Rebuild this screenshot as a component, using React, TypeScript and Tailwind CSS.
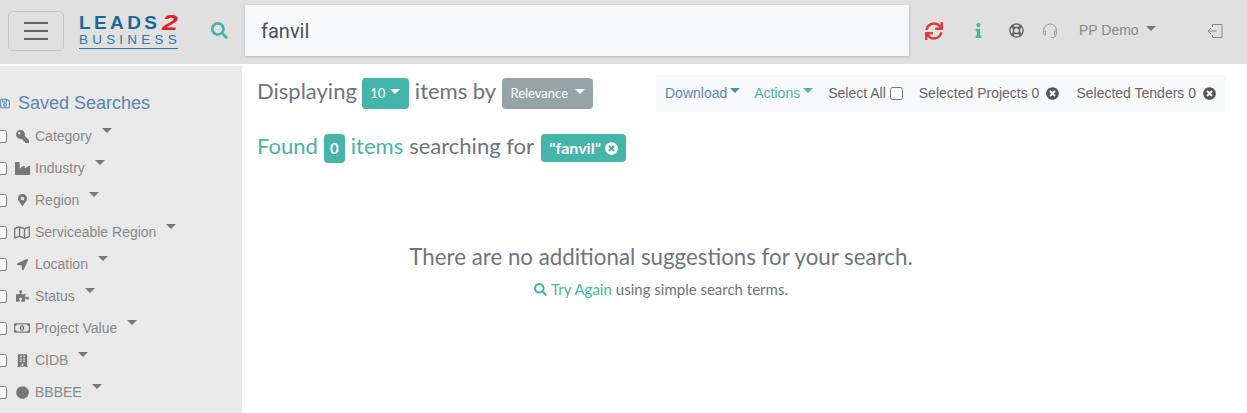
import React from "react";
import {
  FaBuilding,
  FaCircle,
  FaIndustry,
  FaInfo,
  FaKey,
  FaLocationArrow,
  FaMapMarkerAlt,
  FaPuzzlePiece,
  FaRegLifeRing,
  FaRegMap,
  FaRegMoneyBillAlt,
  FaRegSave,
  FaSearch,
  FaSync,
  FaTimesCircle,
} from "react-icons/fa";

const Caret = ({ className = "" }: { className?: string }) => (
  <span
    className={`inline-block w-0 h-0 border-x-[5px] border-t-[5px] border-x-transparent ${className}`}
  />
);

const filters = [
  { label: "Category", icon: <FaKey className="w-[13px] h-[13px] -scale-x-100" /> },
  { label: "Industry", icon: <FaIndustry className="w-[15px] h-[15px]" /> },
  { label: "Region", icon: <FaMapMarkerAlt className="w-[9px] h-[12px]" /> },
  { label: "Serviceable Region", icon: <FaRegMap className="w-[16px] h-[15px]" /> },
  { label: "Location", icon: <FaLocationArrow className="w-[11px] h-[11px]" /> },
  { label: "Status", icon: <FaPuzzlePiece className="w-[13px] h-[12px]" /> },
  { label: "Project Value", icon: <FaRegMoneyBillAlt className="w-[16px] h-[14px]" /> },
  { label: "CIDB", icon: <FaBuilding className="w-[11px] h-[15px]" /> },
  { label: "BBBEE", icon: <FaCircle className="w-[13px] h-[13px]" /> },
];

const App = () => {
  return (
    <div className="w-[1247px] h-[413px] overflow-hidden bg-white font-[Lato,sans-serif]">
      <header className="h-[64px] pb-[3px] bg-[#e0e0e0] flex items-center">
        <button className="ml-2 w-[56px] h-[40px] rounded-[5px] border border-[#c4c4c4] flex flex-col items-center justify-center gap-[6px] shrink-0">
          <span className="w-6 h-[2px] bg-[#666]" />
          <span className="w-6 h-[2px] bg-[#666]" />
          <span className="w-6 h-[2px] bg-[#666]" />
        </button>
        <div className="ml-[15px] w-[99px] shrink-0 font-[Liberation_Sans,sans-serif] mt-px">
          <div className="flex items-end h-[18px] leading-none overflow-visible">
            <span className="text-[19px] font-bold text-[#17699b] tracking-[3.4px]">LEADS</span>
            <span className="ml-[2px] text-[22px] font-bold italic text-[#e2202c] leading-[18px] inline-block scale-x-[1.3] origin-left">
              2
            </span>
          </div>
          <div className="mt-[2px] text-[13.5px] leading-[12px] text-[#2d78a8] tracking-[4.2px] whitespace-nowrap">
            BUSINESS
          </div>
          <div className="h-px bg-[#2d78a8] mt-[2px]" />
        </div>
        <FaSearch className="ml-[33px] w-[17px] h-[17px] text-[#45b5aa] shrink-0" />
        <div className="ml-[17px] w-[664px] h-[51px] bg-[#f8f9fa] shadow-[0_1px_3px_rgba(0,0,0,0.2)] flex items-center pl-4 text-[20px] text-[#495057] font-[Roboto,sans-serif] shrink-0">
          fanvil
        </div>
        <FaSync className="ml-4 w-[18px] h-[18px] text-[#dc3f33] shrink-0" />
        <FaInfo className="ml-[31px] w-[9px] h-[15px] text-[#45b5aa] shrink-0" />
        <FaRegLifeRing className="ml-[26px] w-[15px] h-[15px] text-[#666] shrink-0" />
        <svg
          className="ml-[18px] w-[16px] h-[16px] text-[#999] shrink-0"
          viewBox="0 0 16 16"
          fill="none"
          stroke="currentColor"
        >
          <path d="M1.5 10V7.5a6.5 6.5 0 0 1 13 0V10" />
          <path d="M1.5 9.5c0-1 .6-1.5 2-1.5v4c-1.400 0-2-.5-2-1.500zM14.500 9.500c0-1-.6-1.500-2-1.500v4c1.400 0 2-.5 2-1.500z" />
          <path d="M14 12c0 1.500-1.500 2.500-3.500 2.500H9" />
        </svg>
        <span className="ml-[21px] text-[14px] text-[#888] font-[Liberation_Sans,sans-serif] whitespace-nowrap">
          PP Demo
        </span>
        <Caret className="ml-[7px] -mt-[5px] border-t-[#777]" />
        <svg
          className="ml-[51px] w-[16px] h-[16px] text-[#888] shrink-0"
          viewBox="0 0 16 16"
          fill="none"
          stroke="currentColor"
        >
          <path d="M5.500 4V1.500h9.500v13H5.500V12M9.500 8H1M4 5L1 8l3 3" />
        </svg>
      </header>

      <div className="h-[2px] bg-white" />

      <div className="flex h-[347px]">
        <aside className="w-[242px] shrink-0 bg-[#e9e9e9] pt-[26px] font-[Liberation_Sans,sans-serif] overflow-hidden">
          <div className="flex items-center h-[22px] text-[18px] text-[#5a85b8]">
            <FaRegSave className="w-[10px] h-[11px] mt-px" />
            <span className="ml-2">Saved Searches</span>
          </div>
          <ul className="mt-[6px]">
            {filters.map((f) => (
              <li key={f.label} className="flex items-center h-[32px] text-[14px] text-[#888]">
                <input type="checkbox" className="w-[13px] h-[13px] -ml-[6px] shrink-0" />
                <span className="w-[18px] ml-[6px] flex justify-center shrink-0 text-[#777]">
                  {f.icon}
                </span>
                <span className="ml-[4px] whitespace-nowrap">{f.label}</span>
                <Caret className="ml-[10px] -mt-[11px] border-t-[#777]" />
              </li>
            ))}
          </ul>
        </aside>

        <main className="flex-1 min-w-0 pl-[15px] pr-[21px] text-[#6c757d]">
          <div className="flex items-start pt-[9px]">
            <div className="flex items-center h-[37px] text-[22px] text-[#6c757d]">
              <span className="-mt-[7px]">Displaying</span>
              <button className="ml-[5px] w-[47px] h-[31px] rounded bg-[#45b5aa] text-white text-[13px] flex items-center justify-center gap-[5px]">
                10 <Caret className="-mt-[5px] border-t-white" />
              </button>
              <span className="ml-[6px] -mt-[7px]">items by</span>
              <button className="ml-[6px] w-[91px] h-[31px] rounded bg-[#95a5a5] text-white text-[13px] flex items-center justify-center gap-[7px]">
                Relevance <Caret className="-mt-[5px] border-t-white" />
              </button>
            </div>
            <div className="ml-auto w-[570px] h-[37px] bg-[#f8f9fa] flex items-center pl-[9px] text-[14px] text-[#666] font-[Liberation_Sans,sans-serif] whitespace-nowrap">
              <span className="text-[#5a85b8]">Download</span>
              <Caret className="ml-[3px] -mt-[6px] border-t-[#5a85b8]" />
              <span className="ml-[14px] text-[#4fb3a6]">Actions</span>
              <Caret className="ml-[3px] -mt-[6px] border-t-[#45b5aa]" />
              <span className="ml-[15px]">Select All</span>
              <input type="checkbox" className="ml-[4px] w-[13px] h-[13px]" />
              <span className="ml-[16px]">Selected Projects 0</span>
              <FaTimesCircle className="ml-[7px] w-[13px] h-[13px] text-[#555]" />
              <span className="ml-[17px]">Selected Tenders 0</span>
              <FaTimesCircle className="ml-[7px] w-[13px] h-[13px] text-[#555]" />
            </div>
          </div>

          <div className="flex items-center mt-[22px] h-[29px] text-[22px]">
            <span className="text-[#45b5aa] -mt-[7px]">Found</span>
            <span className="ml-[6px] w-[21px] h-[29px] rounded bg-[#45b5aa] text-white text-[15px] font-bold flex items-center justify-center">
              0
            </span>
            <span className="ml-[6px] text-[#45b5aa] -mt-[7px]">items</span>
            <span className="ml-[6px] -mt-[7px]">searching for</span>
            <span className="ml-[7px] -mt-px w-[85px] h-[28px] rounded bg-[#45b5aa] text-white text-[16px] font-bold flex items-center justify-center gap-[4px]">
              "fanvil"
              <FaTimesCircle className="w-[13px] h-[13px]" />
            </span>
          </div>

          <div className="ml-[152px] w-[504px] mt-[79px] text-center">
            <div className="text-[22.3px] leading-[30px] whitespace-nowrap">
              There are no additional suggestions for your search.
            </div>
            <div className="mt-[7px] text-[15px] leading-[20px] flex items-center justify-center">
              <FaSearch className="w-[13px] h-[13px] text-[#45b5aa]" />
              <span className="ml-[4px] text-[#45b5aa]">Try Again</span>
              <span className="ml-[4px]">using simple search terms.</span>
            </div>
          </div>
        </main>
      </div>
    </div>
  );
};

export default App;
